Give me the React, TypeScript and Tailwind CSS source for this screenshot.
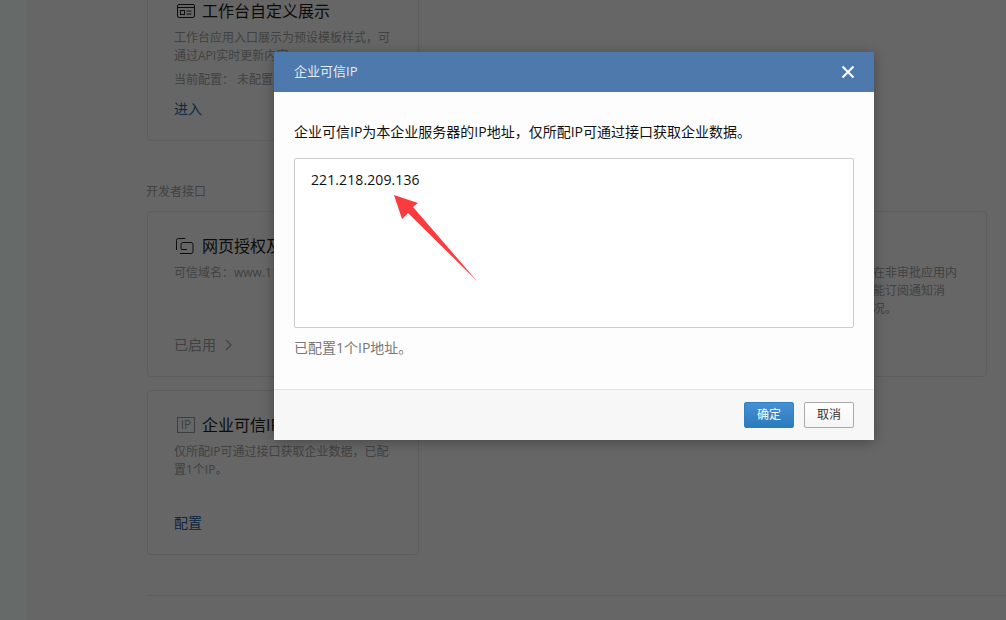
const desc = "text-xs leading-[18px] text-[#a4a4a4]";

function Card({
  icon,
  title,
  children,
  footer,
}: {
  icon?: React.ReactNode;
  title: string;
  children: React.ReactNode;
  footer?: React.ReactNode;
}) {
  return (
    <div className="flex h-full flex-col rounded border border-[#e8e8e8] bg-white pt-[23px] pb-[21px] pl-[26px] pr-[24px]">
      <div className="flex h-[22px] items-center text-base leading-[22px] text-[#1c1c1c]">
        <span className="flex w-[28px] shrink-0">{icon}</span>
        <span className="whitespace-nowrap">{title}</span>
      </div>
      <div className={`mt-[7px] ${desc}`}>{children}</div>
      <div className="mt-auto flex h-5 items-center text-sm leading-5">{footer}</div>
    </div>
  );
}

function PanelIcon() {
  return (
    <svg width="18" height="14" viewBox="0 0 18 14" fill="none" stroke="#222" className="ml-[3px]">
      <rect x="0.5" y="0.5" width="17" height="13" rx="1.5" />
      <path d="M0.5 3.5h17" />
      <rect x="3.5" y="6.5" width="4" height="4" />
      <path d="M9.5 7h5M9.5 10h5" />
    </svg>
  );
}

function CopyIcon() {
  return (
    <svg width="19" height="16" viewBox="0 0 19 16" fill="none" stroke="#222" className="ml-[1px]">
      <path d="M1.5 12V2.5a2 2 0 0 1 2-2h7" />
      <path d="M6 6.5a2 2 0 0 1 2-2h8a2 2 0 0 1 2 2v7a2 2 0 0 1-2 2H5" />
      <path d="M6 6.5v4a1 1 0 0 0 1 1h5" />
    </svg>
  );
}

function IpIcon() {
  return (
    <span className="ml-[3px] flex h-4 w-[18px] items-center justify-center border border-[#999] text-xs leading-none text-[#a4a4a4]">
      IP
    </span>
  );
}

function Modal() {
  return (
    <div className="absolute top-[52px] left-[247px] w-[600px] bg-white shadow-[0_2px_12px_rgba(0,0,0,0.3)]">
      <div className="flex h-10 items-center justify-between bg-[#4d79ad] pr-[19px] pl-5">
        <span className="text-[13px] text-[#e6ecf3]">企业可信IP</span>
        <svg width="14" height="14" viewBox="0 0 14 14" stroke="#fff" strokeWidth="2">
          <path d="M1.5 1.5l11 11M12.5 1.5l-11 11" />
        </svg>
      </div>
      <div className="relative bg-[#fdfdfd] px-5 pt-[30px] pb-[31px]">
        <p className="text-sm leading-5 text-[#111]">企业可信IP为本企业服务器的IP地址，仅所配IP可通过接口获取企业数据。</p>
        <textarea
          readOnly
          defaultValue="221.218.209.136"
          className="mt-4 block h-[170px] w-full resize-none rounded-[2px] border border-[#ccc] bg-white px-4 pt-[11px] text-sm leading-5 tracking-[0.1px] text-[#111] outline-none"
        />
        <p className="mt-[10px] text-sm leading-5 text-[#787878]">已配置1个IP地址。</p>
        {/* red annotation arrow */}
        <svg
          width="90"
          height="92"
          viewBox="0 0 90 92"
          className="absolute top-[100px] left-[118px]"
          fill="#fb3b3e"
        >
          <polygon points="2,3 26,11 21,15 85,89 16,21 10,27" />
        </svg>
      </div>
      <div className="flex justify-end gap-[10px] border-t border-[#e4e4e4] bg-[#f7f7f7] px-5 py-3">
        <button className="h-[26px] w-[50px] rounded-[2px] border border-[#2f80c2] bg-gradient-to-b from-[#4590d2] to-[#2a7bbd] text-xs text-white">
          确定
        </button>
        <button className="h-[26px] w-[50px] rounded-[2px] border border-[#aaa] bg-gradient-to-b from-white to-[#f5f5f5] text-xs text-[#333]">
          取消
        </button>
      </div>
    </div>
  );
}

export default function App() {
  return (
    <div className="flex h-[620px] w-[1006px] overflow-hidden font-['Open_Sans','Noto_Sans_CJK_SC',sans-serif]">
      <div className="w-[27px] shrink-0 bg-[#666b69]" />
      <div className="relative flex-1 overflow-hidden bg-white">
        <div className="-mt-[24px] pl-[120px]">
          <div className="h-[165px] w-[272px]">
            <Card icon={<PanelIcon />} title="工作台自定义展示" footer={<span className="text-[#176bb0]">进入</span>}>
              <p>工作台应用入口展示为预设模板样式，可通过API实时更新内容。</p>
              <p className="mt-[6px]">当前配置： 未配置</p>
            </Card>
          </div>

          <div className="mt-[41px] mb-[9px] -ml-px text-xs leading-5 text-[#a4a4a4]">开发者接口</div>

          <div className="grid grid-cols-[272px_272px_272px] grid-rows-[166px_165px] gap-x-3 gap-y-[13px]">
            <Card
              icon={<CopyIcon />}
              title="网页授权及JS-SDK"
              footer={
                <span className="flex items-center gap-[9px] text-[#a4a4a4]">
                  已启用
                  <svg width="7" height="12" viewBox="0 0 7 12" fill="none" stroke="#a4a4a4" strokeWidth="1.3">
                    <path d="M1 1l5 5-5 5" />
                  </svg>
                </span>
              }
            >
              可信域名：www.11.com
            </Card>
            <div />
            <Card title="审批接口">
              <div className="-ml-px">
                配置审批应用，可用接口在非审批应用内
                <br />
                发起审批，仅已配置应用能订阅通知消
                <br />
                息可随时了解审批进展情况。
              </div>
            </Card>
            <Card icon={<IpIcon />} title="企业可信IP" footer={<span className="text-[#2160a8]">配置</span>}>
              仅所配IP可通过接口获取企业数据，已配置1个IP。
            </Card>
          </div>

          <div className="mt-10 h-px bg-[#e8e8e8]" />
        </div>

        <div className="absolute inset-0 bg-black/60" />
        <Modal />
      </div>
    </div>
  );
}
